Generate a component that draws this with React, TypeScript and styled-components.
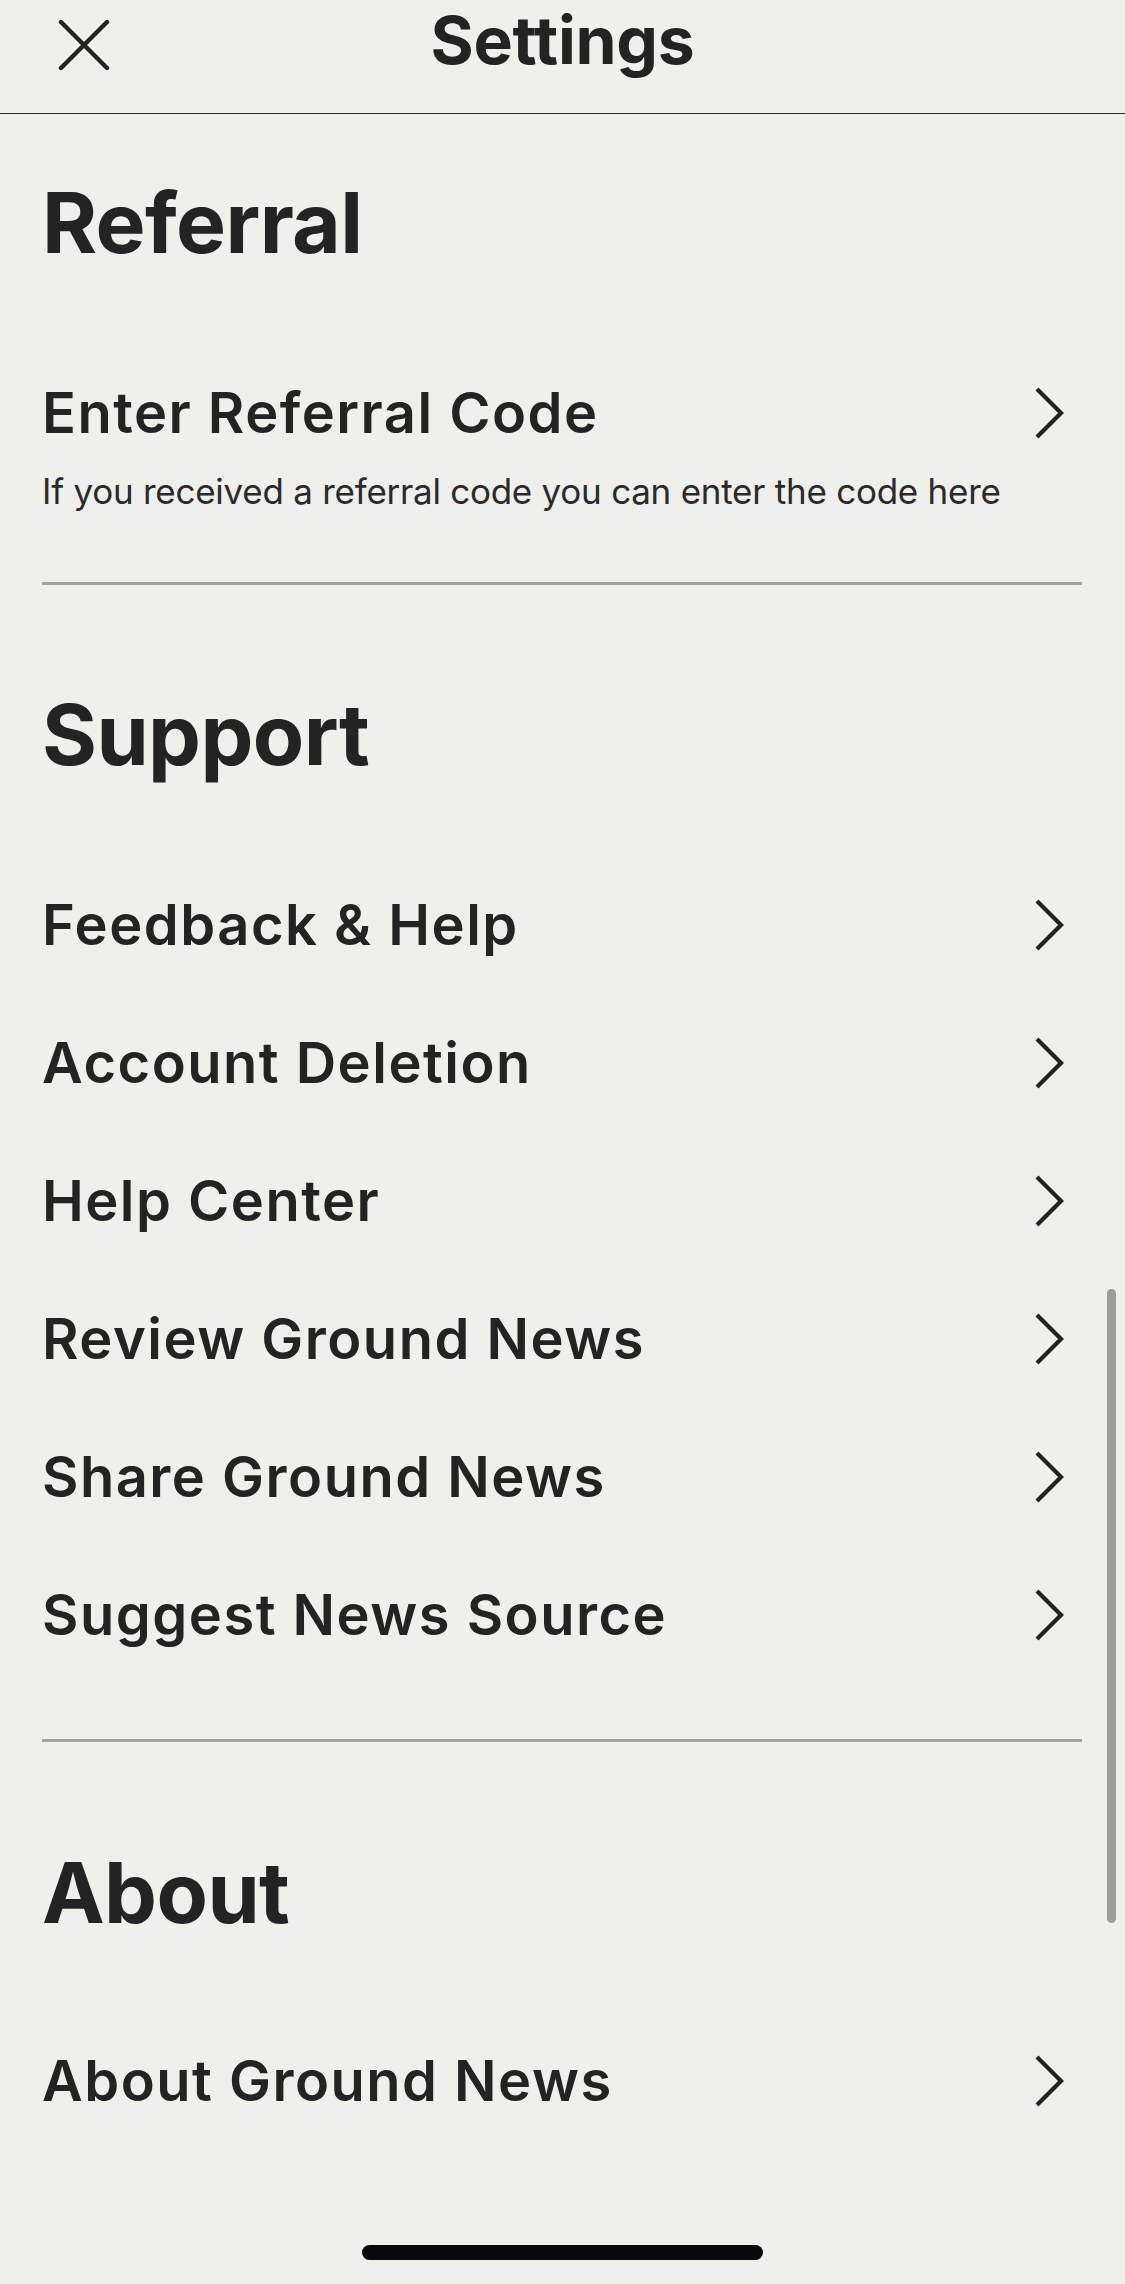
import React from "react";
import styled, { createGlobalStyle } from "styled-components";

const Global = createGlobalStyle`
  html, body {
    margin: 0;
    padding: 0;
    background: #efefeb;
  }
  body {
    font-family: Inter, "Noto Sans", "Liberation Sans", sans-serif;
    color: #232323;
  }
  * { box-sizing: border-box; }
`;

const Page = styled.div`
  position: relative;
  width: 1125px;
  min-height: 2284px;
  background: #efefeb;
  overflow: hidden;
`;

const Header = styled.header`
  display: grid;
  grid-template-columns: 1fr auto 1fr;
  align-items: start;
  height: 113.5px;
  border-bottom: 1.5px solid #2a2a2a;
`;

const CloseButton = styled.button`
  justify-self: start;
  margin: 19px 0 0 58px;
  padding: 0;
  width: 52px;
  height: 52px;
  border: none;
  background: none;
  color: #232323;
  display: flex;
  align-items: center;
  justify-content: center;
`;

const Title = styled.h1`
  margin: 0;
  font-size: 66px;
  line-height: 81px;
  font-weight: 700;
  letter-spacing: -0.3px;
  color: #232323;
`;

const Content = styled.main`
  padding: 0 43px 0 42px;
`;

const Section = styled.section<{ $top: number; $bottom: number }>`
  padding-top: ${(p) => p.$top}px;
  padding-bottom: ${(p) => p.$bottom}px;
`;

const Heading = styled.h2<{ $gap: number }>`
  margin: 0 0 ${(p) => p.$gap}px;
  font-size: 84px;
  line-height: 100px;
  font-weight: 700;
  letter-spacing: -0.6px;
  color: #232323;
`;

const Row = styled.div<{ $bottom?: number }>`
  display: flex;
  align-items: flex-start;
  justify-content: space-between;
  padding: 35px 0 ${(p) => (p.$bottom ?? 35)}px;
`;

const RowText = styled.div`
  display: flex;
  flex-direction: column;
  gap: 22px;
`;

const RowTitle = styled.span`
  font-size: 56px;
  line-height: 68px;
  font-weight: 560;
  letter-spacing: 1.5px;
  color: #232323;
`;

const RowSub = styled.span`
  font-size: 35px;
  line-height: 44px;
  font-weight: 400;
  color: #2a2a2a;
  letter-spacing: -0.25px;
`;

const Chevron = styled.svg`
  flex: none;
  width: 32px;
  height: 52px;
  margin: 8px 16px 0 0;
`;

const Divider = styled.hr`
  margin: 0;
  border: none;
  height: 3px;
  background: #a3a39f;
`;

const ScrollThumb = styled.div`
  position: absolute;
  left: 1107px;
  top: 1289px;
  width: 9px;
  height: 634px;
  border-radius: 5px;
  background: #9d9d99;
`;

const HomeIndicator = styled.div`
  position: absolute;
  left: 362px;
  top: 2245px;
  width: 401px;
  height: 15px;
  border-radius: 8px;
  background: #0a0a0a;
`;

const ChevronIcon = () => (
  <Chevron viewBox="0 0 32 52" fill="none">
    <path d="M3 2 L27 26 L3 50" stroke="#232323" strokeWidth="4.2" strokeLinejoin="miter" />
  </Chevron>
);

const CloseIcon = () => (
  <svg width="52" height="52" viewBox="0 0 52 52" fill="none">
    <path d="M3 3 L49 49 M49 3 L3 49" stroke="#232323" strokeWidth="4.4" strokeLinecap="round" />
  </svg>
);

type Item = { title: string; sub?: string };

const ItemRow = ({ item, bottom }: { item: Item; bottom?: number }) => (
  <Row $bottom={bottom}>
    <RowText>
      <RowTitle>{item.title}</RowTitle>
      {item.sub && <RowSub>{item.sub}</RowSub>}
    </RowText>
    <ChevronIcon />
  </Row>
);

const support: Item[] = [
  { title: "Feedback & Help" },
  { title: "Account Deletion" },
  { title: "Help Center" },
  { title: "Review Ground News" },
  { title: "Share Ground News" },
  { title: "Suggest News Source" },
];

export default function App() {
  return (
    <Page>
      <Global />
      <Header>
        <CloseButton aria-label="Close">
          <CloseIcon />
        </CloseButton>
        <Title>Settings</Title>
        <span />
      </Header>
      <Content>
        <Section $top={59} $bottom={34}>
          <Heading $gap={71}>Referral</Heading>
          <ItemRow
            item={{
              title: "Enter Referral Code",
              sub: "If you received a referral code you can enter the code here",
            }}
          />
        </Section>
        <Divider />
        <Section $top={100} $bottom={55}>
          <Heading $gap={71}>Support</Heading>
          {support.map((s) => (
            <ItemRow key={s.title} item={s} />
          ))}
        </Section>
        <Divider />
        <Section $top={101} $bottom={0}>
          <Heading $gap={69}>About</Heading>
          <ItemRow item={{ title: "About Ground News" }} />
        </Section>
      </Content>
      <ScrollThumb />
      <HomeIndicator />
    </Page>
  );
}
